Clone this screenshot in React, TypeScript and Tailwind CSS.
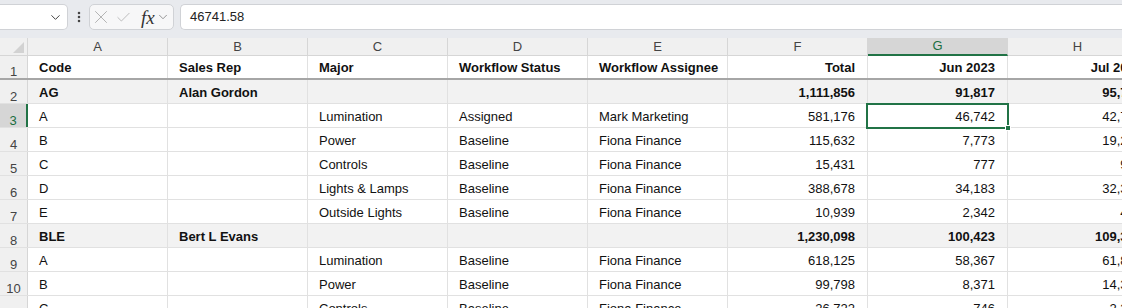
import { ChevronDown, EllipsisVertical, X, Check } from "lucide-react";

type Row = { n: number; cells: string[]; bold?: boolean };

const cols = ["A", "B", "C", "D", "E", "F", "G", "H"];
const rightCols = [5, 6, 7];

const rows: Row[] = [
  { n: 1, bold: true, cells: ["Code", "Sales Rep", "Major", "Workflow Status", "Workflow Assignee", "Total", "Jun 2023", "Jul 2023"] },
  { n: 2, bold: true, cells: ["AG", "Alan Gordon", "", "", "", "1,111,856", "91,817", "95,712"] },
  { n: 3, cells: ["A", "", "Lumination", "Assigned", "Mark Marketing", "581,176", "46,742", "42,715"] },
  { n: 4, cells: ["B", "", "Power", "Baseline", "Fiona Finance", "115,632", "7,773", "19,215"] },
  { n: 5, cells: ["C", "", "Controls", "Baseline", "Fiona Finance", "15,431", "777", "912"] },
  { n: 6, cells: ["D", "", "Lights & Lamps", "Baseline", "Fiona Finance", "388,678", "34,183", "32,318"] },
  { n: 7, cells: ["E", "", "Outside Lights", "Baseline", "Fiona Finance", "10,939", "2,342", "454"] },
  { n: 8, bold: true, cells: ["BLE", "Bert L Evans", "", "", "", "1,230,098", "100,423", "109,336"] },
  { n: 9, cells: ["A", "", "Lumination", "Baseline", "Fiona Finance", "618,125", "58,367", "61,842"] },
  { n: 10, cells: ["B", "", "Power", "Baseline", "Fiona Finance", "99,798", "8,371", "14,362"] },
  { n: 11, cells: ["C", "", "Controls", "Baseline", "Fiona Finance", "26,722", "746", "2,352"] },
];

function FormulaBar() {
  return (
    <div className="flex h-[38px] items-start bg-[#e8eaee] pt-[4px]">
      {/* name box */}
      <div className="flex h-[26px] w-[68px] items-center justify-end rounded-r-[5px] border border-l-0 border-[#d0d2d6] bg-white pr-[4px]">
        <ChevronDown size={15} strokeWidth={1.6} className="text-[#444]" />
      </div>
      <div className="flex h-[26px] w-[21px] items-center justify-center">
        <EllipsisVertical size={14} strokeWidth={2.4} className="text-[#444]" />
      </div>
      {/* cancel / enter / fx */}
      <div className="flex h-[26px] w-[85px] items-center rounded-[5px] border border-[#d0d2d6] bg-[#f7f7f8]">
        <X size={22} strokeWidth={1} className="text-[#adadad]" />
        <Check size={17} strokeWidth={1.1} className="ml-[3px] text-[#adadad]" />
        <span className="ml-[9px] font-['Liberation_Serif',serif] text-[19px] italic leading-none text-[#333]">fx</span>
        <ChevronDown size={14} strokeWidth={1.3} className="ml-[1px] text-[#777]" />
      </div>
      {/* formula input */}
      <div className="ml-[6px] flex h-[26px] flex-1 items-center rounded-l-[5px] border border-r-0 border-[#d0d2d6] bg-white pl-[9px] text-[13px] text-[#222]">
        46741.58
      </div>
    </div>
  );
}

function HeaderRow() {
  return (
    <div className="flex h-[18px] bg-[#f0f0f0] text-[13px] text-[#444]">
      <div className="relative w-[28px] shrink-0 border-r border-b border-[#d6d6d6]">
        <div className="absolute bottom-[2px] right-[3px] h-0 w-0 border-b-[11px] border-l-[11px] border-b-[#d2d2d2] border-l-transparent" />
      </div>
      {cols.map((c) => {
        const sel = c === "G";
        return (
          <div
            key={c}
            className={
              sel
                ? "flex w-[140px] shrink-0 items-center justify-center border-r border-b-2 border-r-[#d6d6d6] border-b-[#217346] bg-[#d6d6d6] text-[#1b6e3f]"
                : "flex w-[140px] shrink-0 items-center justify-center border-r border-b border-[#d6d6d6]"
            }
          >
            {c}
          </div>
        );
      })}
    </div>
  );
}

function GridRow({ row }: { row: Row }) {
  const sel = row.n === 3;
  const shaded = row.n === 2 || row.n === 8;
  const heavy = row.n === 1;
  return (
    <div
      className={
        heavy
          ? "flex h-[24px] border-b-2 border-[#a6a6a6]"
          : "flex h-[24px] border-b border-[#e1e1e1]"
      }
    >
      <div
        className={
          sel
            ? "flex w-[28px] shrink-0 items-end justify-center border-r-2 border-[#217346] bg-[#d6d6d6] text-[13px] leading-[13px] text-[#1b6e3f]"
            : "flex w-[28px] shrink-0 items-end justify-center border-r border-[#d6d6d6] bg-[#f0f0f0] text-[13px] leading-[13px] text-[#444]"
        }
      >
        {row.n}
      </div>
      {row.cells.map((v, i) => (
        <div
          key={i}
          className={[
            "flex shrink-0 items-center overflow-hidden whitespace-nowrap border-r border-[#e1e1e1] pt-[2px] text-[13px] text-[#111]",
            i === 7 ? "w-[147px]" : "w-[140px]",
            rightCols.includes(i) ? "justify-end pr-[12px]" : "pl-[11px]",
            row.bold ? "font-bold" : "",
            shaded ? "bg-[#f2f2f2]" : "bg-white",
          ].join(" ")}
        >
          {v}
        </div>
      ))}
    </div>
  );
}

export default function App() {
  return (
    <div className="relative h-[308px] w-[1122px] overflow-hidden bg-white font-['Liberation_Sans',Arial,sans-serif]">
      <FormulaBar />
      <div className="w-[1160px]">
        <HeaderRow />
        {rows.map((r) => (
          <GridRow key={r.n} row={r} />
        ))}
      </div>
      {/* active cell G3 */}
      <div className="pointer-events-none absolute left-[866px] top-[103px] h-[26px] w-[143px] border-2 border-[#217346]">
        <div className="absolute -bottom-[4px] -right-[4px] h-[6px] w-[6px] border border-white bg-[#217346]" />
      </div>
    </div>
  );
}
